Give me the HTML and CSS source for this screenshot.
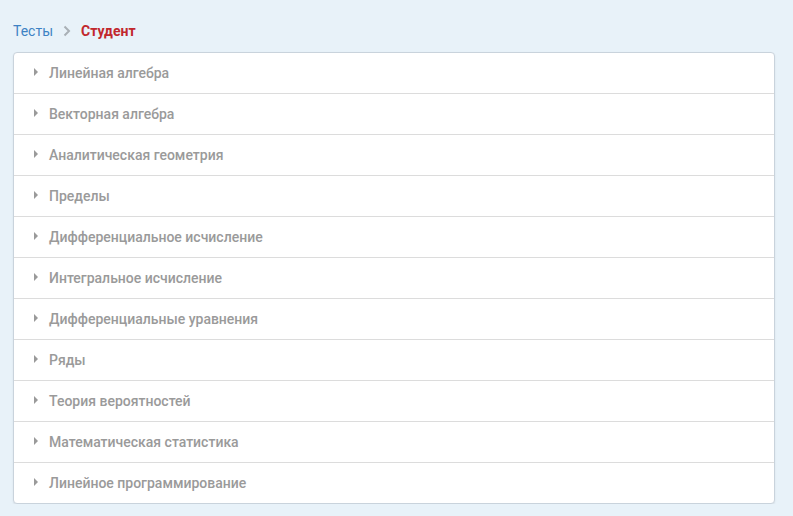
FILE: index.html
```html
<!DOCTYPE html>
<html lang="ru">
<head>
<meta charset="utf-8">
<link rel="stylesheet" href="styles.css">
</head>
<body>
<div class="page">
  <nav class="crumbs">
    <a class="crumb-link" href="#">Тесты</a>
    <svg class="crumb-sep" width="8" height="12" viewBox="0 0 8 12"><path d="M1.5 1.5 L6 6 L1.5 10.5" fill="none" stroke="#a9b0b6" stroke-width="2"/></svg>
    <span class="crumb-current">Студент</span>
  </nav>
  <ul class="list">
    <li class="item"><span class="caret"></span>Линейная алгебра</li>
    <li class="item"><span class="caret"></span>Векторная алгебра</li>
    <li class="item"><span class="caret"></span>Аналитическая геометрия</li>
    <li class="item"><span class="caret"></span>Пределы</li>
    <li class="item"><span class="caret"></span>Дифференциальное исчисление</li>
    <li class="item"><span class="caret"></span>Интегральное исчисление</li>
    <li class="item"><span class="caret"></span>Дифференциальные уравнения</li>
    <li class="item"><span class="caret"></span>Ряды</li>
    <li class="item"><span class="caret"></span>Теория вероятностей</li>
    <li class="item"><span class="caret"></span>Математическая статистика</li>
    <li class="item"><span class="caret"></span>Линейное программирование</li>
  </ul>
</div>
</body>
</html>
```
FILE: styles.css
```css
html, body {
  margin: 0;
  padding: 0;
  background: #e8f2f9;
  font-family: Roboto, "Noto Sans", sans-serif;
}
.page {
  padding: 21px 18px 0 13px;
}
.crumbs {
  display: flex;
  align-items: center;
  height: 20px;
  font-size: 14px;
  margin-bottom: 11px;
}
.crumb-link {
  color: #3d82c4;
  text-decoration: none;
}
.crumb-sep {
  margin: 0 10px 0 10px;
}
.crumb-current {
  color: #c1272d;
  font-weight: 700;
}
.list {
  list-style: none;
  margin: 0;
  padding: 0;
  background: #fff;
  border: 1px solid #c9d3dc;
  border-radius: 4px;
  box-shadow: 0 1px 2px rgba(0,0,0,0.08);
}
.item {
  display: flex;
  align-items: center;
  height: 40px;
  padding-left: 20px;
  border-top: 1px solid #dcdcdc;
  font-size: 14px;
  font-weight: 500;
  color: #9a9a9a;
}
.item:first-child {
  border-top: none;
}
.caret {
  width: 0;
  height: 0;
  border-top: 4px solid transparent;
  border-bottom: 4px solid transparent;
  border-left: 4px solid #9a9a9a;
  margin-right: 11px;
  margin-top: -2px;
}
```
